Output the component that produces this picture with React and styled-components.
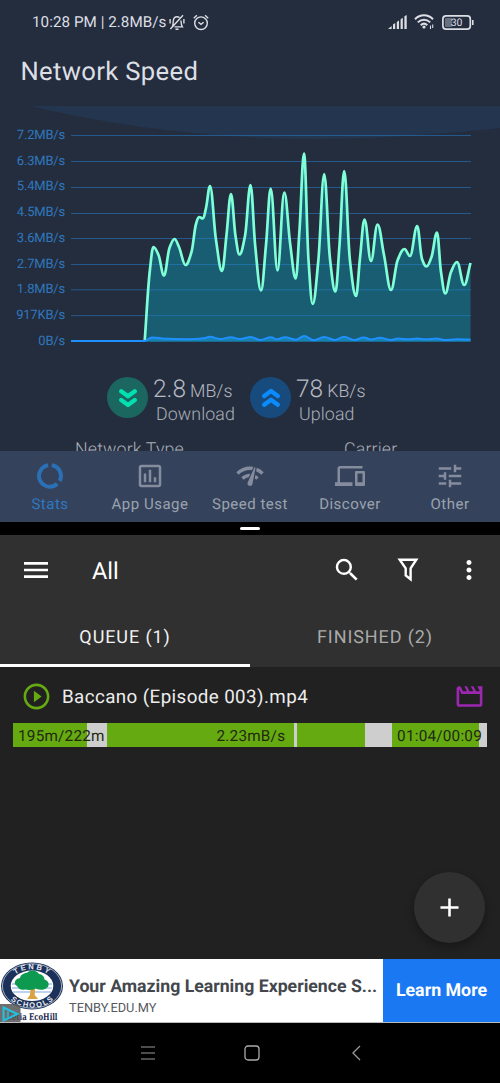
import styled, { createGlobalStyle } from "styled-components";
import {
  MdAdd,
  MdDevices,
  MdMenu,
  MdMoreVert,
  MdNetworkCheck,
  MdOutlineInsertChartOutlined,
  MdOutlineMovie,
  MdPlayCircleOutline,
  MdSearch,
  MdTune,
} from "react-icons/md";

const GlobalStyle = createGlobalStyle`
  * {
    box-sizing: border-box;
  }
  body {
    margin: 0;
    background: #000;
    font-family: Roboto, sans-serif;
    text-rendering: geometricPrecision;
  }
  svg {
    display: block;
    flex: none;
  }
`;

const Screen = styled.div`
  display: flex;
  flex-direction: column;
  width: 500px;
  height: 1083px;
  overflow: hidden;
`;

/* network monitor */
const Monitor = styled.section`
  display: flex;
  flex-direction: column;
  height: 522px;
  background: #242d3e;
`;
const StatusBar = styled.div`
  display: flex;
  align-items: center;
  height: 44px;
  padding: 0 26px 0 32px;
  color: #dcdee4;
`;
const Clock = styled.span`
  width: 137px;
  font-size: 15.2px;
  letter-spacing: 0.05px;
  white-space: nowrap;
`;
const StatusIcons = styled.div`
  display: flex;
  align-items: center;
  gap: ${({ $gap }) => $gap}px;
  margin-left: ${({ $push }) => ($push ? "auto" : 0)};
`;
const Heading = styled.h1`
  height: 62px;
  margin: 0;
  padding-left: 20.5px;
  color: #dcdfe4;
  font-size: 25.6px;
  font-weight: 400;
  line-height: 57px;
  letter-spacing: 0.35px;
`;
const ChartArea = styled.div`
  position: relative;
  display: flex;
  height: 245px;
  padding-top: 16px;
`;
const Arc = styled.svg`
  position: absolute;
  top: 0;
  left: 0;
`;
const Scale = styled.div`
  position: relative;
  width: 71px;
  padding: 1px 6px 0 0;
  color: #2f77bd;
  font-size: 13px;
  line-height: 25.7px;
  letter-spacing: -0.2px;
  text-align: right;
`;
const Plot = styled.svg`
  position: relative;
  overflow: visible;
`;
const Rates = styled.div`
  display: flex;
  height: 86px;
  padding: 24px 0 0 107px;
`;
const Rate = styled.div`
  display: flex;
  width: 143px;
  gap: 5px;
`;
const RateBadge = styled.div`
  display: flex;
  align-items: center;
  justify-content: center;
  width: 41px;
  height: 41px;
  margin-top: 2px;
  border-radius: 50%;
  background: ${({ $bg }) => $bg};
`;
const RateValue = styled.div`
  display: flex;
  align-items: baseline;
  gap: 4px;
  height: 28px;
  color: #b6bac2;
  font-size: 24.5px;
  font-weight: 300;
  line-height: 28px;
`;
const Unit = styled.span`
  font-size: 17.8px;
`;
const RateLabel = styled.div`
  padding-left: 3px;
  color: #aaafb9;
  font-size: 17.8px;
  font-weight: 300;
  line-height: 24px;
  letter-spacing: 0.1px;
`;
const Details = styled.div`
  display: flex;
  height: 14px;
  padding-left: 75px;
  overflow: hidden;
  color: #a9aeb8;
  font-size: 17.8px;
  font-weight: 300;
  line-height: 25px;
  letter-spacing: 0.15px;
`;
const DetailName = styled.span`
  flex: none;
  width: 269px;
`;
const BottomNav = styled.nav`
  display: flex;
  height: 71px;
  background: #35425b;
`;
const NavItem = styled.div`
  display: flex;
  flex-direction: column;
  align-items: center;
  width: 100px;
  padding-top: 10px;
  color: ${({ $active }) => ($active ? "#2b70b4" : "#858c9d")};
`;
const NavLabel = styled.span`
  margin-top: 4px;
  color: ${({ $active }) => ($active ? "#2d78c2" : "#9ba2af")};
  font-size: 15px;
  line-height: 18px;
  letter-spacing: 0.5px;
`;

const Splitter = styled.div`
  display: flex;
  align-items: center;
  justify-content: center;
  height: 13px;
  background: #000;
`;
const Handle = styled.div`
  width: 20px;
  height: 3px;
  border-radius: 2px;
  background: #fff;
`;

/* download manager */
const Downloads = styled.section`
  display: flex;
  flex-direction: column;
  height: 424px;
  background: #212121;
`;
const Toolbar = styled.div`
  display: flex;
  align-items: center;
  height: 72px;
  padding: 0 16px 2px 20px;
  background: #303030;
  color: #fff;
`;
const ToolbarTitle = styled.span`
  flex: 1;
  padding: 2px 0 0 40px;
  font-size: 23.5px;
`;
const Actions = styled.div`
  display: flex;
  align-items: center;
  gap: 31px;
`;
const Tabs = styled.div`
  display: flex;
  height: 60px;
  background: #303030;
`;
const Tab = styled.div`
  width: 250px;
  border-bottom: 3px solid ${({ $active }) => ($active ? "#fff" : "#303030")};
  color: ${({ $active }) => ($active ? "#f2f2f2" : "#aaa")};
  font-size: 18px;
  line-height: 62px;
  letter-spacing: 0.9px;
  text-align: center;
`;
const FileRow = styled.div`
  display: flex;
  align-items: center;
  height: 56px;
  padding: 2px 15px 0 21px;
`;
const FileName = styled.span`
  flex: 1;
  padding: 2px 0 0 10px;
  color: #ededed;
  font-size: 18.8px;
  letter-spacing: 0.4px;
`;
const Progress = styled.div`
  position: relative;
  display: flex;
  height: 24px;
  margin: 0 13px;
`;
const Chunk = styled.div`
  flex: ${({ $size }) => $size} 0 0;
  background: ${({ $done }) => ($done ? "#66aa12" : "#cecece")};
`;
const ProgressText = styled.div`
  position: absolute;
  inset: 0;
  display: flex;
  justify-content: space-between;
  padding: 0 5px;
  color: #21290f;
  font-size: 15.3px;
  line-height: 26px;
  letter-spacing: 0.22px;
`;
const AddButton = styled.div`
  display: flex;
  align-items: center;
  justify-content: center;
  width: 71px;
  height: 71px;
  margin: auto 15.5px 16px auto;
  border-radius: 50%;
  background: #303030;
  box-shadow: 0 4px 8px rgba(0, 0, 0, 0.3);
  color: #fff;
`;

/* ad banner */
const Banner = styled.div`
  display: flex;
  height: 64px;
  border-bottom: 1px solid #bbb;
  background: #fff;
`;
const BannerBody = styled.div`
  flex: 1;
  padding: 16px 0 0 5px;
  white-space: nowrap;
`;
const BannerTitle = styled.div`
  color: #43474d;
  font-size: 17.7px;
  font-weight: 700;
  line-height: 24px;
`;
const BannerUrl = styled.div`
  color: #55585d;
  font-size: 12.8px;
  line-height: 20px;
`;
const BannerButton = styled.div`
  width: 117px;
  background: #1a78f2;
  color: #fff;
  font-size: 17.8px;
  font-weight: 700;
  line-height: 63px;
  text-align: center;
`;

const SystemNav = styled.div`
  display: flex;
  align-items: center;
  justify-content: center;
  gap: 86px;
  height: 60px;
  padding-left: 4px;
`;

const scale = ["7.2MB/s", "6.3MB/s", "5.4MB/s", "4.5MB/s", "3.6MB/s", "2.7MB/s", "1.8MB/s", "917KB/s", "0B/s"];
const gridLines = [135.5, 161.5, 187.5, 213.5, 238.5, 264.5, 289.8, 315.6, 341];

const download = [
  [144.7, 341], [149.8, 271], [153.5, 247], [158.5, 255], [164, 275.5], [169.5, 248],
  [174.5, 239], [179, 247], [185.5, 265], [191.5, 252], [196, 224], [199, 217],
  [203, 218.5], [206, 208], [210, 186], [216, 240], [222, 271], [226.5, 235],
  [231, 194], [235.5, 236], [239.5, 254.5], [245, 236], [250.5, 185], [255.3, 247],
  [261, 290.5], [266, 245], [270.7, 188.5], [277.5, 270.5], [284.3, 192.5], [290.3, 245],
  [295.7, 278.5], [299.5, 230], [304, 153.5], [308.5, 260], [312.7, 304], [318.3, 261],
  [324.2, 174], [330, 259], [335.4, 291.5], [339.5, 245], [344.2, 171], [350, 261],
  [356, 296], [360, 258], [364.5, 219.5], [371, 261], [377.5, 224.5], [384, 255],
  [391, 290], [397.7, 260], [404.5, 249], [410, 256], [417.2, 226], [422, 259],
  [426.5, 266.5], [431.5, 257], [437, 232.5], [441, 272], [445.3, 293.5], [451, 272],
  [457, 262], [464.2, 285], [470.5, 263],
];
const upload = [
  [71, 341], [144, 341], [152, 337.5], [168, 338.8], [188, 339.2], [204, 338.2], [210, 336.8],
  [220, 339], [231, 337.2], [240, 339], [251, 337], [260, 340], [271, 337.2], [277, 339.3],
  [285, 337.3], [296, 339.7], [304, 336], [314, 340.2], [324, 337], [335, 340], [344, 336.8],
  [354, 340], [364, 337.5], [371, 339.5], [380, 337.8], [391, 340], [398, 338.5], [408, 339.3],
  [417, 338.5], [426, 339.3], [437, 338.5], [444, 340], [457, 339.3], [470.5, 339.5],
];

// monotone cubic through the samples, so peaks never overshoot
const curve = (points) => {
  const slope = points.slice(1).map(([x, y], i) => (y - points[i][1]) / (x - points[i][0]));
  const tangent = points.map((_, i) => {
    if (i === 0) return slope[0];
    if (i === points.length - 1) return slope[i - 1];
    const a = slope[i - 1];
    const b = slope[i];
    return a * b <= 0 ? 0 : (2 * a * b) / (a + b);
  });
  return points.slice(1).reduce((d, [x, y], i) => {
    const [px, py] = points[i];
    const h = (x - px) / 2.6;
    return `${d}C${px + h},${py + tangent[i] * h} ${x - h},${y - tangent[i + 1] * h} ${x},${y}`;
  }, `M${points[0]}`);
};

const SpeedChart = () => (
  <ChartArea>
    <Arc width="500" height="34" viewBox="0 106 500 34">
      <path d="M30 106Q170 139 320 139Q410 138 500 128V106Z" fill="#24364f" />
    </Arc>
    <Scale>
      {scale.map((label) => (
        <div key={label}>{label}</div>
      ))}
    </Scale>
    <Plot width="400" height="229" viewBox="71 122 400 229">
      <path d={`${curve(download)}V341.5H144.7Z`} fill="#185d72" />
      {gridLines.map((y) => (
        <path key={y} d={`M71 ${y}H471`} stroke="#2684d8" strokeOpacity="0.5" />
      ))}
      <path d={`${curve(upload)}V341.5H71Z`} fill="#1782b0" />
      <path d={curve(download)} fill="none" stroke="#7fffd8" strokeWidth="2.7" strokeLinejoin="round" />
      <path d={curve(upload)} fill="none" stroke="#1e90ff" strokeWidth="2" />
    </Plot>
  </ChartArea>
);

const MutedBell = () => (
  <svg width="16" height="17" viewBox="0 0 16 17" fill="none" stroke="currentColor" strokeWidth="1.4">
    <path d="M3.2 12.5C4.6 10.8 4 8.8 4.3 6.6C4.7 4 6 2.8 8 2.8C9 2.8 9.8 3.1 10.4 3.6M12 6.5C12.1 9 12 11 13.4 12.9H5.5M6.5 15.2H9.5M14 1.2L1.4 15M1.1 5V9.5M14.9 5V9.5" />
  </svg>
);

const AlarmClock = () => (
  <svg width="16" height="17" viewBox="0 0 16 17" fill="none" stroke="currentColor" strokeWidth="1.4">
    <circle cx="8" cy="9.2" r="6.3" />
    <path d="M5.4 8.2L8 10.4L10.6 8.2M0.8 4.2L3.9 1.3M15.2 4.2L12.1 1.3" />
  </svg>
);

const Signal = () => (
  <svg width="19" height="14" viewBox="0 0 19 14" fill="currentColor">
    <path d="M0 14L3.6 11V14ZM5 9.5L7.2 8V14H5ZM8.8 7L11 5.5V14H8.8ZM12.6 4.3L14.8 2.8V14H12.6ZM16.4 1.3L18.7 0V14H16.4Z" />
  </svg>
);

const Wifi = () => (
  <svg width="21" height="16" viewBox="0 0 21 16" fill="none" stroke="currentColor" strokeWidth="2">
    <path d="M1 5.2C6.2 0 13.8 0 19 5.2M3.8 8.4C7.5 4.7 12.5 4.7 16.2 8.4M6.7 11.2C8.8 9.2 11.2 9.2 13.3 11.2" />
    <circle cx="10" cy="13" r="1.6" fill="currentColor" stroke="none" />
    <path d="M16.5 11.5V15M18.7 10.5V14" strokeWidth="1.1" />
  </svg>
);

const Battery = () => (
  <svg width="32" height="15" viewBox="0 0 32 15">
    <rect x="0.9" y="0.9" width="27.4" height="13.2" rx="3.2" fill="none" stroke="currentColor" strokeWidth="1.7" />
    <rect x="3" y="3" width="7" height="9" rx="1" fill="#687080" />
    <path d="M30 5h1.6v5H30Z" fill="currentColor" />
    <text x="14.6" y="11.3" fontSize="10.5" textAnchor="middle" fill="currentColor">30</text>
  </svg>
);

const Chevrons = ({ color, up }) => (
  <svg width="18" height="20" viewBox="0 0 18 20" fill="none" stroke={color} strokeWidth="4.2" strokeLinecap="round" strokeLinejoin="round">
    <path d={up ? "M2.2 8L9 3L15.8 8M2.2 16.7L9 11.7L15.8 16.7" : "M2.2 3.3L9 8.3L15.8 3.3M2.2 12L9 17L15.8 12"} />
  </svg>
);

const StatsRing = () => (
  <svg width="30" height="30" viewBox="0 0 30 30" fill="none" stroke="currentColor" strokeWidth="4" strokeLinejoin="round">
    <path d="M16.8 4.3A10.8 10.8 0 0 1 24.7 20M22.3 22.8A10.8 10.8 0 1 1 13.2 4.3" />
  </svg>
);

const Funnel = () => (
  <svg width="30" height="30" viewBox="0 0 30 30" fill="none" stroke="currentColor" strokeWidth="2.4">
    <path d="M6.7 4.7H23.3L17.6 13.3V24.2L12.7 20.4V13.3Z" />
  </svg>
);

const SchoolLogo = () => (
  <svg width="64" height="63" viewBox="0 0 64 63">
    <defs>
      <path id="crest-top" d="M9.5 27A22.5 16.8 0 0 1 54.5 27" />
      <path id="crest-bottom" d="M4.5 27A27.5 21.8 0 0 0 59.5 27" />
    </defs>
    <ellipse cx="32" cy="27" rx="31" ry="23.5" fill="#1c3159" />
    <ellipse cx="32" cy="27" rx="29.6" ry="22.2" fill="none" stroke="#dfe5ef" strokeWidth="0.7" />
    <ellipse cx="32" cy="26.8" rx="21.3" ry="15.3" fill="#fff" />
    <path d="M12 25H52M12 29H52M13 33H51" stroke="#a9c3e8" strokeWidth="1.5" />
    <path d="M30.5 29L30 36L27 40H38L34.7 36L35 29Z" fill="#d9a33f" />
    <path d="M17 27C12.5 24.5 15.5 19.5 20 19C20.5 15 25 14 27.5 13.5C31 10 37 11.5 39 15C43 15.5 44.5 18.5 44.5 20.5C49.5 22 50 27.5 46 29.5C43 31.5 39 31 35.5 29.5C32 31.5 28 31 25 30.5C21 31.5 18.5 30 17 27Z" fill="#0d9a50" />
    <text fontFamily="Liberation Sans, sans-serif" fontSize="7.6" fontWeight="700" fill="#e6ebf3" letterSpacing="2.2">
      <textPath href="#crest-top" startOffset="51%" textAnchor="middle">TENBY</textPath>
    </text>
    <text fontFamily="Liberation Sans, sans-serif" fontSize="7.6" fontWeight="700" fill="#e6ebf3" letterSpacing="1.5">
      <textPath href="#crest-bottom" startOffset="51%" textAnchor="middle">SCHOOLS</textPath>
    </text>
    <text x="7" y="60.5" fontFamily="DejaVu Serif, serif" fontSize="9.2" fontWeight="700" fill="#1b2b50" textLength="50.5" lengthAdjust="spacingAndGlyphs">Setia EcoHill</text>
    <path d="M0 45H15Q20.5 45 20.5 50V63H0Z" fill="#555" fillOpacity="0.85" />
    <path d="M3.5 48.5L17.5 55L3.5 61.5Z" fill="none" stroke="#25bfe0" strokeWidth="2" />
    <path d="M8 52.5V58" stroke="#25bfe0" strokeWidth="1.6" />
  </svg>
);

const navItems = [
  { label: "Stats", icon: <StatsRing />, active: true },
  { label: "App Usage", icon: <MdOutlineInsertChartOutlined size={30} /> },
  { label: "Speed test", icon: <MdNetworkCheck size={30} /> },
  { label: "Discover", icon: <MdDevices size={30} /> },
  { label: "Other", icon: <MdTune size={30} /> },
];
const chunks = [74, 20, 187, 3, 68, 27, 87, 8];

const App = () => {
  return (
    <>
      <GlobalStyle />
      <Screen>
        <Monitor>
          <StatusBar>
            <Clock>10:28 PM | 2.8MB/s</Clock>
            <StatusIcons $gap={8}>
              <MutedBell />
              <AlarmClock />
            </StatusIcons>
            <StatusIcons $gap={7} $push>
              <Signal />
              <Wifi />
              <Battery />
            </StatusIcons>
          </StatusBar>
          <Heading>Network Speed</Heading>
          <SpeedChart />
          <Rates>
            <Rate>
              <RateBadge $bg="#1c6660">
                <Chevrons color="#00e0b0" />
              </RateBadge>
              <div>
                <RateValue>2.8<Unit>MB/s</Unit></RateValue>
                <RateLabel>Download</RateLabel>
              </div>
            </Rate>
            <Rate>
              <RateBadge $bg="#184b7d">
                <Chevrons color="#0a8cff" up />
              </RateBadge>
              <div>
                <RateValue>78<Unit>KB/s</Unit></RateValue>
                <RateLabel>Upload</RateLabel>
              </div>
            </Rate>
          </Rates>
          <Details>
            <DetailName>Network Type</DetailName>
            <DetailName>Carrier</DetailName>
          </Details>
          <BottomNav>
            {navItems.map(({ label, icon, active }) => (
              <NavItem key={label} $active={active}>
                {icon}
                <NavLabel $active={active}>{label}</NavLabel>
              </NavItem>
            ))}
          </BottomNav>
        </Monitor>
        <Splitter>
          <Handle />
        </Splitter>
        <Downloads>
          <Toolbar>
            <MdMenu size={32} />
            <ToolbarTitle>All</ToolbarTitle>
            <Actions>
              <MdSearch size={30} />
              <Funnel />
              <MdMoreVert size={30} />
            </Actions>
          </Toolbar>
          <Tabs>
            <Tab $active>QUEUE (1)</Tab>
            <Tab>FINISHED (2)</Tab>
          </Tabs>
          <FileRow>
            <MdPlayCircleOutline size={31} color="#66aa12" />
            <FileName>Baccano (Episode 003).mp4</FileName>
            <MdOutlineMovie size={31} color="#9c27b0" />
          </FileRow>
          <Progress>
            {chunks.map((size, index) => (
              <Chunk key={index} $size={size} $done={index % 2 === 0} />
            ))}
            <ProgressText>
              <span>195m/222m</span>
              <span>2.23mB/s</span>
              <span>01:04/00:09</span>
            </ProgressText>
          </Progress>
          <AddButton>
            <MdAdd size={31} />
          </AddButton>
        </Downloads>
        <Banner>
          <SchoolLogo />
          <BannerBody>
            <BannerTitle>Your Amazing Learning Experience S...</BannerTitle>
            <BannerUrl>TENBY.EDU.MY</BannerUrl>
          </BannerBody>
          <BannerButton>Learn More</BannerButton>
        </Banner>
        <SystemNav>
          <svg width="20" height="20" viewBox="0 0 20 20" stroke="#999" strokeWidth="1.1">
            <path d="M3 4H17M3 10H17M3 16H17" />
          </svg>
          <svg width="16" height="16" viewBox="0 0 16 16" fill="none" stroke="#aaa" strokeWidth="1.3">
            <rect x="1" y="1" width="14" height="14" rx="3" />
          </svg>
          <svg width="20" height="20" viewBox="0 0 20 20" fill="none" stroke="#999" strokeWidth="1.3">
            <path d="M14 3L7 10L14 17" />
          </svg>
        </SystemNav>
      </Screen>
    </>
  );
};

export default App;
